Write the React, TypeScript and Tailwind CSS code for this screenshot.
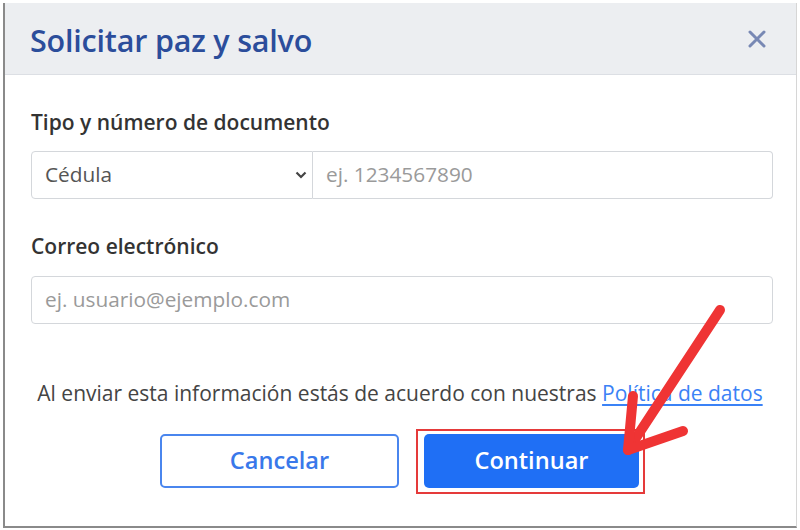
import React from "react";

export default function App() {
  const font = { fontFamily: '"Open Sans", "Noto Sans", sans-serif' };
  return (
    <div className="w-[800px] h-[530px] bg-white overflow-hidden" style={font}>
      <div className="relative ml-[3px] mt-[3px] w-[794px] h-[525px] border-l-2 border-b-2 border-r border-l-[#8a8a8a] border-b-[#8a8a8a] border-r-[#d6d6d6] bg-white flex flex-col">
        <div className="h-[72px] shrink-0 bg-[#eceef1] border-b border-[#dcdfe4] flex items-center justify-between pl-[25px] pr-[28px]">
          <h1 className="text-[30.5px] font-semibold text-[#2b4d9b] tracking-[-0.2px] leading-[40px] pt-[2px]">Solicitar paz y salvo</h1>
          <svg width="18" height="18" viewBox="0 0 18 18" className="mr-[2px]">
            <path d="M2 2 L16 16 M16 2 L2 16" stroke="#7888b4" strokeWidth="3" strokeLinecap="round" />
          </svg>
        </div>
        <div className="pl-[26px] pr-[23px] flex flex-col">
          <label className="mt-[34px] text-[21px] font-semibold text-[#333] leading-[26px]">Tipo y número de documento</label>
          <div className="mt-[16px] flex h-[48px]">
            <div className="w-[282px] border border-[#d4d7db] rounded-l-[4px] flex items-center justify-between pl-[13px] pr-[5px] text-[20.8px] text-[#555]">
              <span>Cédula</span>
              <svg width="12" height="10" viewBox="0 0 12 10">
                <path d="M1.5 2.5 L6 7 L10.5 2.5" stroke="#444" strokeWidth="2.2" fill="none" />
              </svg>
            </div>
            <div className="flex-1 border border-l-0 border-[#d4d7db] rounded-r-[4px] flex items-center pl-[13px] text-[20.8px] text-[#9a9a9a]">
              ej. 1234567890
            </div>
          </div>
          <label className="mt-[34px] text-[21px] font-semibold text-[#333] leading-[26px]">Correo electrónico</label>
          <div className="mt-[17px] h-[48px] border border-[#d4d7db] rounded-[4px] flex items-center pl-[13px] text-[20.8px] text-[#9a9a9a]">
            ej. usuario@ejemplo.com
          </div>
          <p className="mt-[56px] text-center text-[21px] text-[#444] leading-[26px] pr-[4px] whitespace-nowrap">
            Al enviar esta información estás de acuerdo con nuestras{" "}
            <span className="text-[#3b82f6] underline underline-offset-[3px]">Política de datos</span>
          </p>
          <div className="mt-[28px] flex justify-center gap-[25px] pr-[5px]">
            <button className="w-[239px] h-[54px] rounded-[5px] border-2 border-[#4a86ee] bg-white text-[#3978ea] text-[23.6px] font-semibold">
              Cancelar
            </button>
            <div className="relative">
              <div className="absolute -left-[8px] -top-[5px] w-[229px] h-[65px] border-2 border-[#e53a3a]" />
              <button className="relative w-[215px] h-[54px] rounded-[5px] bg-[#1f6ff5] text-white text-[23.6px] font-semibold">
                Continuar
              </button>
            </div>
          </div>
        </div>
        <svg className="absolute left-0 top-0 pointer-events-none" width="794" height="525" viewBox="0 0 794 525">
          <g transform="translate(-5 -3)" stroke="#ef3434" strokeWidth="10" strokeLinecap="round" strokeLinejoin="round" fill="none">
            <path d="M720 310 L628 450" />
            <path d="M633 396 L628 450 L683 431" />
          </g>
        </svg>
      </div>
    </div>
  );
}
